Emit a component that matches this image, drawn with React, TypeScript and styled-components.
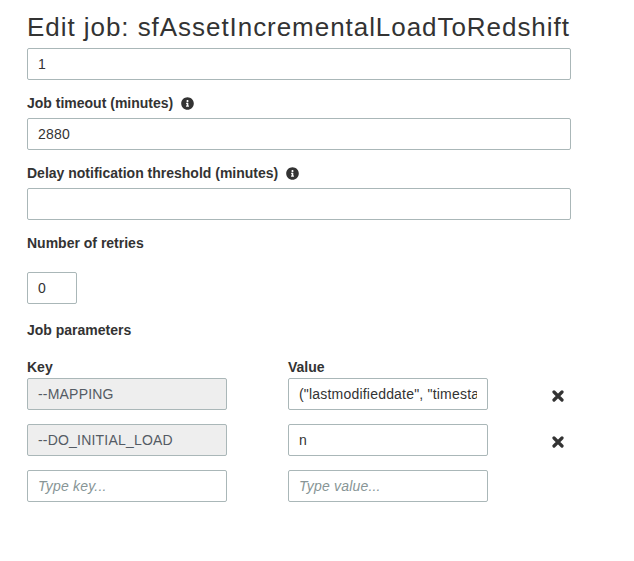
import React from "react";
import styled, { createGlobalStyle } from "styled-components";
import { FaInfoCircle } from "react-icons/fa";

const Global = createGlobalStyle`
  html, body { margin: 0; padding: 0; background: #ffffff; }
  body { font-family: "Liberation Sans", Arial, Helvetica, sans-serif; color: #333333; }
  * { box-sizing: border-box; }
`;

const Page = styled.div`
  padding: 11px 0 40px 27px;
  width: 634px;
`;

const Title = styled.h1`
  margin: 0 0 5px;
  font-size: 26px;
  line-height: 32px;
  font-weight: 400;
  letter-spacing: 0.95px;
  color: #333333;
  white-space: nowrap;
`;

const Label = styled.div<{ $mt?: number; $mb?: number }>`
  display: flex;
  align-items: center;
  gap: 8px;
  margin-top: ${(p) => p.$mt ?? 13}px;
  margin-bottom: ${(p) => p.$mb ?? 5}px;
  font-size: 14px;
  line-height: 20px;
  font-weight: 700;
  color: #333333;
`;

const Info = styled(FaInfoCircle)`
  width: 13px;
  height: 13px;
  color: #333333;
`;

const TextInput = styled.input<{ $w?: number; $readonly?: boolean }>`
  display: block;
  width: ${(p) => (p.$w ? `${p.$w}px` : "544px")};
  height: 32px;
  padding: 0 10px;
  border: 1px solid #aab7b8;
  border-radius: 2px;
  background: ${(p) => (p.$readonly ? "#eeeeee" : "#ffffff")};
  font-family: "Liberation Sans", Arial, Helvetica, sans-serif;
  font-size: 14px;
  letter-spacing: 0.2px;
  color: ${(p) => (p.$readonly ? "#545b64" : "#333333")};
  outline: none;
  &::placeholder {
    color: #879596;
    font-style: italic;
  }
`;

const ColHeads = styled.div`
  display: flex;
  gap: 61px;
  margin-top: 17px;
  margin-bottom: 1px;
`;

const ColHead = styled.div`
  width: 200px;
  font-size: 14px;
  line-height: 20px;
  font-weight: 700;
  color: #333333;
`;

const ParamList = styled.div`
  display: flex;
  flex-direction: column;
  gap: 14px;
`;

const ParamRow = styled.div`
  display: flex;
  align-items: center;
  gap: 61px;
`;

const Remove = styled.button`
  display: flex;
  align-items: center;
  justify-content: center;
  width: 14px;
  height: 14px;
  margin: 4px 0 0 2px;
  padding: 0;
  border: none;
  background: transparent;
  color: #333333;
  cursor: pointer;
`;

const CrossIcon = () => (
  <svg width="12" height="12" viewBox="0 0 12 12" aria-hidden="true">
    <path
      d="M2 2 L10 10 M10 2 L2 10"
      stroke="#333333"
      strokeWidth="3.2"
      strokeLinecap="round"
      fill="none"
    />
  </svg>
);

const params = [
  { key: "--MAPPING", value: '("lastmodifieddate", "timestamp", "lastmodifieddate", "timestamp")' },
  { key: "--DO_INITIAL_LOAD", value: "n" },
];

export default function App() {
  return (
    <>
      <Global />
      <Page>
        <Title>Edit job: sfAssetIncrementalLoadToRedshift</Title>
        <TextInput defaultValue="1" />
        <Label>
          Job timeout (minutes) <Info />
        </Label>
        <TextInput defaultValue="2880" />
        <Label>
          Delay notification threshold (minutes) <Info />
        </Label>
        <TextInput defaultValue="" />
        <Label $mb={19}>Number of retries</Label>
        <TextInput $w={50} defaultValue="0" />
        <Label $mt={16} $mb={0}>Job parameters</Label>
        <ColHeads>
          <ColHead>Key</ColHead>
          <ColHead>Value</ColHead>
        </ColHeads>
        <ParamList>
          {params.map((p) => (
            <ParamRow key={p.key}>
              <TextInput $w={200} $readonly readOnly defaultValue={p.key} />
              <TextInput $w={200} defaultValue={p.value} />
              <Remove aria-label="Remove">
                <CrossIcon />
              </Remove>
            </ParamRow>
          ))}
          <ParamRow>
            <TextInput $w={200} placeholder="Type key..." />
            <TextInput $w={200} placeholder="Type value..." />
          </ParamRow>
        </ParamList>
      </Page>
    </>
  );
}
